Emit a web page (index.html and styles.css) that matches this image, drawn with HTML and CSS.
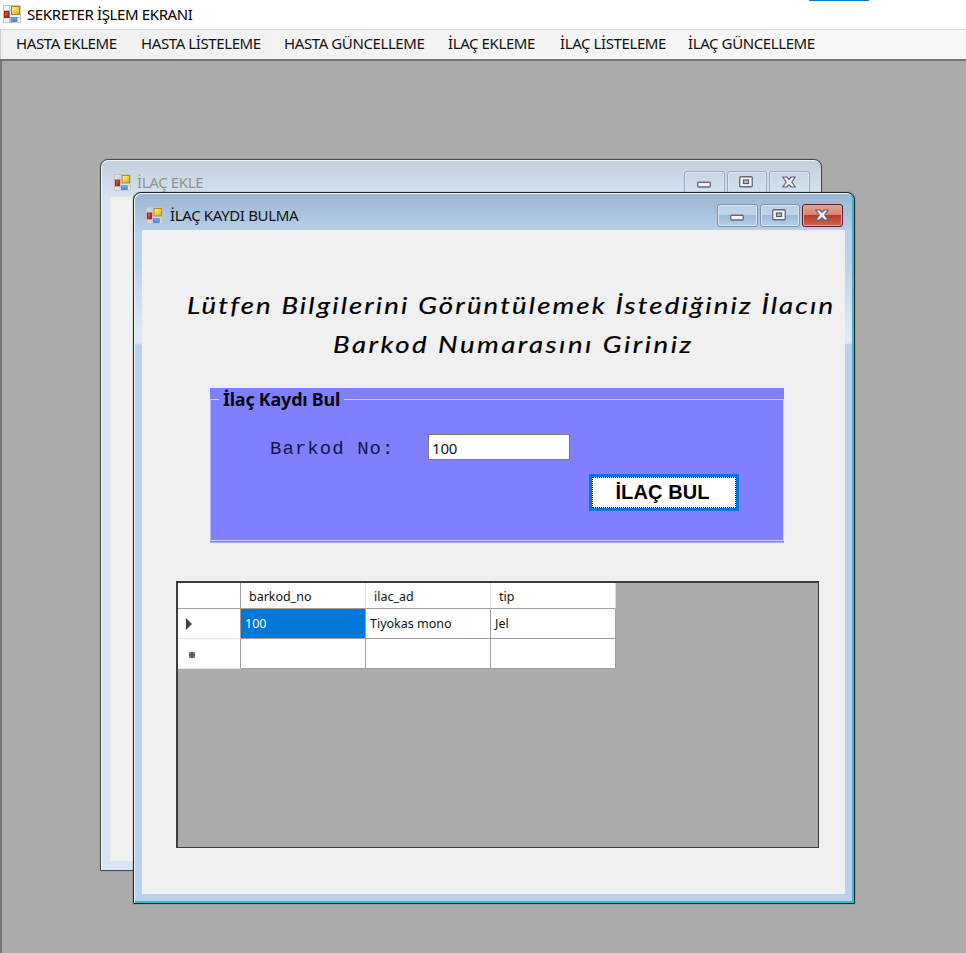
FILE: index.html
```
<!DOCTYPE html>
<html lang="tr">
<head>
<meta charset="utf-8">
<title>SEKRETER İŞLEM EKRANI</title>
<link rel="stylesheet" href="styles.css">
</head>
<body>
<svg width="0" height="0" class="defs" aria-hidden="true">
  <defs>
    <linearGradient id="gold" x1="0" y1="0" x2="1" y2="1"><stop offset="0" stop-color="#fff3a8"/><stop offset="1" stop-color="#e9a800"/></linearGradient>
    <linearGradient id="red" x1="0" y1="0" x2="1" y2="1"><stop offset="0" stop-color="#e0705c"/><stop offset="1" stop-color="#a81010"/></linearGradient>
    <linearGradient id="blue" x1="0" y1="0" x2="0" y2="1"><stop offset="0" stop-color="#86b4f8"/><stop offset="1" stop-color="#3b72d8"/></linearGradient>
    <symbol id="form" viewBox="0 0 18 18">
      <path d="M.5.5h17v17H.5zM.5 5.5h17M.5 12.5h17M6.500.5v17" fill="#eee" fill-opacity=".45" stroke="#c5c5c5"/>
      <rect x="8.500" y="1.500" width="8" height="8" fill="url(#gold)" stroke="#b48412"/>
      <rect x="1.500" y="6.500" width="4.500" height="6" fill="url(#red)" stroke="#9c2018"/>
      <rect x="8" y="12.500" width="6" height="4" fill="url(#blue)" stroke="#5a8ae0"/>
    </symbol>
    <symbol id="min" viewBox="0 0 14 12"><rect x=".75" y="6.250" width="12.500" height="4.750" rx="1" fill="#f4f4f4" stroke="#62677c" stroke-width="1.300"/></symbol>
    <symbol id="max" viewBox="0 0 14 12"><rect x=".75" y=".75" width="12.500" height="10" rx="1" fill="#f4f4f4" stroke="#62677c" stroke-width="1.300"/><rect x="4.500" y="4" width="5" height="3.500" fill="#a9c3de" stroke="#555b70" stroke-width="1.200"/></symbol>
    <symbol id="close" viewBox="0 0 14 12"><path d="M.7 1h4.100L7 3.300 9.200 1h4.100L9.700 6l3.600 5H9.200L7 8.700 4.800 11H.7l3.600-5z" fill="#f2f2f2" stroke="#5a5f73" stroke-width="1.200" stroke-linejoin="round"/></symbol>
  </defs>
</svg>
<header class="app-title">
  <svg class="ico"><use href="#form"/></svg><span>SEKRETER İŞLEM EKRANI</span>
  <i class="accent"></i>
</header>
<nav class="menu">
  <span>HASTA EKLEME</span><span>HASTA LİSTELEME</span><span>HASTA GÜNCELLEME</span><span>İLAÇ EKLEME</span><span>İLAÇ LİSTELEME</span><span>İLAÇ GÜNCELLEME</span>
</nav>
<main class="mdi">
  <section class="window back">
    <div class="bar"><svg class="ico"><use href="#form"/></svg><span class="caption">İLAÇ EKLE</span>
      <div class="controls"><b><svg><use href="#min"/></svg></b><b><svg><use href="#max"/></svg></b><b><svg><use href="#close"/></svg></b></div></div>
    <div class="client"></div>
  </section>
  <section class="window front">
    <div class="bar"><svg class="ico"><use href="#form"/></svg><span class="caption">İLAÇ KAYDI BULMA</span>
      <div class="controls"><b><svg><use href="#min"/></svg></b><b><svg><use href="#max"/></svg></b><b class="red"><svg><use href="#close"/></svg></b></div></div>
    <div class="client">
      <h1><span class="line l1">Lütfen Bilgilerini Görüntülemek İstediğiniz İlacın</span><span class="line l2">Barkod Numarasını Giriniz</span></h1>
      <div class="group">
        <div class="legend"><span>İlaç Kaydı Bul</span></div>
        <div class="groupbody">
          <div class="field"><label>Barkod No:</label><div class="input">100</div></div>
          <div class="button"><span>İLAÇ BUL</span></div>
        </div>
      </div>
      <div class="datagrid">
        <div class="row head"><div></div><div>barkod_no</div><div>ilac_ad</div><div>tip</div></div>
        <div class="row"><div class="rh"><svg width="8" height="12"><path d="M1 0l6 6-6 6z" fill="#404040"/></svg></div><div class="selected">100</div><div>Tiyokas mono</div><div>Jel</div></div>
        <div class="row"><div class="rh star"><svg width="8" height="8"><circle cx="4" cy="4" r="3" fill="#4a4a4a"/><path d="M4 .5v7M.5 4h7M1.200 1.200l5.600 5.600M6.800 1.200L1.200 6.800" stroke="#666"/></svg></div><div></div><div></div><div></div></div>
      </div>
    </div>
  </section>
</main>
</body>
</html>
```
FILE: styles.css
```
* { box-sizing: border-box; }
body { margin: 0; width: 966px; height: 953px; overflow: hidden; background: #fff; color: #111; font-family: "Noto Sans", sans-serif; display: flex; flex-direction: column; }
.defs { position: absolute; }
.ico { width: 18px; height: 18px; flex: none; }
.app-title { position: relative; height: 29px; flex: none; display: flex; align-items: center; padding-left: 3px; gap: 6px; font-size: 15px; letter-spacing: -.38px; white-space: nowrap; color: #000; }
.app-title .ico { margin-top: -1px; }
.app-title span { margin-top: -1px; }
.accent { position: absolute; left: 809px; top: 0; width: 60px; height: 1px; background: #0078d7; }
.menu { height: 30px; flex: none; background: linear-gradient(90deg, #f0f0f0, #f8f8f8); border-top: 1px solid #d9d9d9; border-left: 1px solid #ccc; padding-left: 15px; display: grid; grid-template-columns: 125px 143px 164px 112px 128px 140px; font-size: 15px; line-height: 27px; letter-spacing: -.4px; white-space: nowrap; }
.mdi { position: relative; flex: 1; background: #ababab; border-top: 2px solid #757575; border-left: 2px solid #757575; }
.window { position: absolute; width: 722px; height: 712px; border: 1px solid #484848; border-radius: 8px 8px 0 0; padding: 0 9px 9px 8px; display: flex; flex-direction: column; }
.back { left: 98px; top: 98px; background: linear-gradient(#c1cfdc, #d7e4f2 38px); box-shadow: inset 1px 1px #eef4fa, 0 0 1px #555; color: #929292; padding-left: 9px; }
.front { left: 131px; top: 131px; background: linear-gradient(#9ab4d3, #b8d0e9 38px, #bcd3ec 70px, #dce8f5 138px, #dce8f5 150px, #b9d1ea 152px); box-shadow: inset 1px 1px #edf6ff, inset -2px -2px #39b8cd, 0 0 1px #111; border-color: #202428; }
.bar { height: 37px; flex: none; display: flex; padding-left: 4px; padding-top: 14px; }
.bar .ico { width: 17px; height: 17px; }
.caption { margin-left: 7px; margin-top: -3px; line-height: 22px; font-size: 15px; letter-spacing: -.35px; white-space: nowrap; }
.back .caption { margin-left: 6px; }
.controls { margin-left: auto; margin-top: -3px; margin-right: 2px; display: flex; gap: 2px; }
.controls b { width: 40.700px; height: 23px; border: 1px solid #7b91af; border-radius: 3px; box-shadow: inset 0 0 0 1px #dce9f6; background: linear-gradient(#bed3e9 48%, #9ebad8 50%, #b6d0ea); display: flex; align-items: center; justify-content: center; }
.back .controls b { background: transparent; box-shadow: inset 0 0 0 1px #dce6ef; border-color: #98a8bd; }
.controls svg { width: 14px; height: 12px; margin-top: -1px; margin-right: 1px; }
.controls .red { border-color: #5b1c25; box-shadow: inset 0 0 0 1px #e3a79d; background: linear-gradient(#dfa093, #d68474 48%, #b93a25 50%, #cd6a50); }
.client { flex: 1; background: #f0f0f0; }
.front .client { display: flex; flex-direction: column; padding-left: 34px; }
h1 { margin: 56px 0 0; font: italic 400 23px/39px Lato, sans-serif; color: #000; height: 102px; -webkit-text-stroke: .2px #000; }
.line { display: block; width: max-content; white-space: nowrap; transform: scaleX(1.2); transform-origin: left; }
.l1 { margin-left: 11px; letter-spacing: 1.770px; }
.l2 { margin-left: 157px; letter-spacing: 2.070px; }
.group { margin-left: 34px; width: 574px; height: 155px; flex: none; background: #8080ff; border-bottom: 1px solid #a6a6fb; padding-bottom: 1px; display: flex; flex-direction: column; }
.legend { height: 11px; flex: none; padding-left: 9px; }
.legend span { display: block; width: 125px; height: 22px; padding-left: 4px; font-weight: 700; font-size: 18px; line-height: 23px; letter-spacing: -.25px; white-space: nowrap; color: #050510; background: #8080ff; position: relative; z-index: 1; }
.groupbody { flex: 1; border: 1px solid #d0d0f2; border-left-color: #b8b8f8; }
.field { display: flex; padding-left: 59px; margin-top: 34px; }
label { width: 158px; font: 19px/30px "Liberation Mono", monospace; letter-spacing: 1.050px; color: #15154a; white-space: nowrap; height: 26px; }
.input { width: 142px; height: 26px; border: 1px solid #7a7a7a; background: #fff; font-size: 15px; line-height: 26px; padding-left: 3px; letter-spacing: -.2px; }
.button { width: 150px; height: 37px; margin: 14px 0 0 378px; background: #fff; border: 3px solid #0078d7; font: bold 20px/29px "Liberation Sans", sans-serif; text-align: center; color: #000; }
.button span { display: block; height: 31px; border: 1px dotted #000; padding-right: 3px; letter-spacing: .1px; }
.datagrid { margin-top: 38px; width: 643px; height: 267px; flex: none; background: #ababab; border: 2px solid #3d3d3d; border-right-width: 1px; border-bottom-width: 1px; font-size: 12.500px; letter-spacing: 0; }
.row { display: grid; grid-template-columns: 63px 125px 125px 125px; width: 438px; height: 30px; background: #fff; }
.row > div { border-right: 1px solid #a0a0a0; border-bottom: 1px solid #a0a0a0; padding-left: 4px; line-height: 29px; white-space: nowrap; }
.head { height: 26px; }
.row.head > div { border-right-color: #e0e0e0; padding-left: 8px; padding-top: 2px; line-height: 23px; }
.row.head > div:first-child { border-right-color: #a0a0a0; }
.row > .rh { border-bottom-color: #e5e5e5; padding-left: 7px; display: flex; align-items: center; }
.row > .star { padding-left: 10px; padding-top: 3px; }
.row > .selected { background: #0078d7; color: #fff; }
```
